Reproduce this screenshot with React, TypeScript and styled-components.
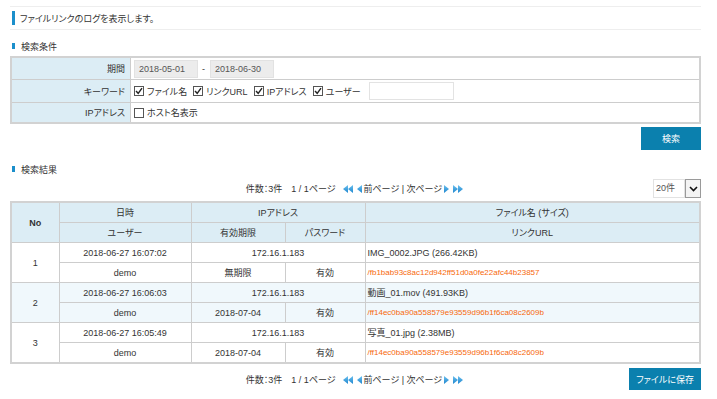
import React from "react";
import styled, { createGlobalStyle } from "styled-components";

const GlobalStyle = createGlobalStyle`
  body {
    margin: 0;
    background: #fff;
    font-family: "Liberation Sans", "Noto Sans CJK JP", sans-serif;
    font-size: 9px;
    color: #333;
    font-feature-settings: "palt";
  }
`;

const Page = styled.div`
  width: 691px;
  padding: 6px 16px 0 10px;
`;

const Notice = styled.div`
  display: flex;
  align-items: center;
  gap: 5px;
  height: 22px;
  padding-left: 2px;
  border-top: 1px solid #eee;
  border-bottom: 1px solid #eee;

  &::before {
    content: "";
    width: 3px;
    height: 14px;
    background: #1b8fcb;
  }
`;

const SectionTitle = styled.div<{ $top: number }>`
  display: flex;
  align-items: center;
  gap: 6px;
  height: 12px;
  margin-top: ${(p) => p.$top}px;
  padding-left: 2px;

  &::before {
    content: "";
    width: 3px;
    height: 6px;
    background: #1b8fcb;
  }
`;

const Table = styled.table<{ $top: number }>`
  width: 100%;
  margin-top: ${(p) => p.$top}px;
  border-collapse: collapse;
  border: 2px solid #d2d2d2;
  table-layout: fixed;

  th,
  td {
    border: 1px solid #cdcdcd;
    padding: 0 3px;
    font-weight: normal;
  }
`;

const Label = styled.th<{ $h: number }>`
  width: 110px;
  height: ${(p) => p.$h}px;
  background: #dcedf5;
  text-align: right;
  padding-right: 5px !important;
`;

const Field = styled.td`
  text-align: left;
`;

const FieldRow = styled.div`
  display: flex;
  align-items: center;
`;

const DateBox = styled.div`
  width: 58px;
  height: 16px;
  line-height: 16px;
  padding-left: 4px;
  background: #ececec;
  border: 1px solid #e2e2e2;
  color: #555;
`;

const Dash = styled.span`
  margin: 0 5px 0 4px;
`;

const Check = styled.label`
  display: inline-flex;
  align-items: center;
  gap: 3px;
  margin-right: 6px;
  white-space: nowrap;
`;

const Box = styled.span`
  display: inline-flex;
  width: 8px;
  height: 8px;
  border: 1px solid #555;
  background: #fff;
  align-items: center;
  justify-content: center;
`;

const TextInput = styled.div`
  width: 83px;
  height: 16px;
  margin-left: 2px;
  border: 1px solid #e3e3e3;
`;

const ButtonRow = styled.div`
  display: flex;
  justify-content: flex-end;
  margin-top: 3px;
`;

const Button = styled.button<{ $w: number }>`
  width: ${(p) => p.$w}px;
  height: 23px;
  padding: 0;
  border: none;
  background: #0b80ae;
  color: #fff;
  font: inherit;
  font-size: 9px;
`;

const PagerRow = styled.div<{ $top: number; $h: number }>`
  display: grid;
  grid-template-columns: 1fr auto 1fr;
  align-items: center;
  height: ${(p) => p.$h}px;
  margin-top: ${(p) => p.$top}px;
`;

const Pager = styled.div`
  grid-column: 2;
  display: flex;
  align-items: center;
  white-space: nowrap;
`;

const PageInfo = styled.span`
  margin-right: 5px;
`;

const Arrow = styled.svg`
  margin: 0 2px;
`;

const PerPage = styled.div`
  justify-self: end;
  display: flex;
  height: 19px;
`;

const PerPageValue = styled.div`
  width: 28px;
  line-height: 17px;
  padding-left: 2px;
  border: 1px solid #e2e2e2;
  color: #555;
`;

const PerPageToggle = styled.div`
  width: 14px;
  display: flex;
  align-items: center;
  justify-content: center;
  border: 1px solid #9a9a9a;
  background: #f4f4f4;
`;

const BottomButton = styled.div`
  justify-self: end;
  align-self: start;
`;

const Col = styled.col<{ $w: number }>`
  width: ${(p) => p.$w}px;
`;

const HeadCell = styled.th<{ $h?: number }>`
  background: #dcedf5;
  text-align: center;
  ${(p) => (p.$h ? `height: ${p.$h}px;` : "")}
`;

const NoHead = styled(HeadCell)`
  font-weight: bold !important;
`;

const Row = styled.tr<{ $alt: boolean }>`
  background: ${(p) => (p.$alt ? "#f0f8fc" : "#fff")};

  td {
    height: 19px;
    text-align: center;
  }
`;

const FileCell = styled.td`
  text-align: left !important;
  padding-left: 2px !important;
`;

const LinkCell = styled.td`
  text-align: left !important;
  padding-left: 2px !important;
  color: #f7690c;
  font-size: 8px;
  white-space: nowrap;
`;

const Tick = () => (
  <svg width="8" height="8" viewBox="0 0 8 8">
    <path d="M1 4 L3.2 6.3 L7 1.2" fill="none" stroke="#222" strokeWidth="1.4" />
  </svg>
);

const CheckItem = ({ label, checked }: { label: string; checked: boolean }) => (
  <Check>
    <Box>{checked && <Tick />}</Box>
    {label}
  </Check>
);

const Tri = ({ left, x }: { left: boolean; x: number }) =>
  left ? (
    <polygon points={`${x + 5},0 ${x + 5},8 ${x},4`} fill="url(#pg)" />
  ) : (
    <polygon points={`${x},0 ${x},8 ${x + 5},4`} fill="url(#pg)" />
  );

const ArrowIcon = ({ left, double }: { left: boolean; double: boolean }) => (
  <Arrow width={double ? 10 : 5} height="8" viewBox={`0 0 ${double ? 10 : 5} 8`}>
    <defs>
      <linearGradient id="pg" x1="0" y1="0" x2="0" y2="1">
        <stop offset="0" stopColor="#6cc0ee" />
        <stop offset="1" stopColor="#1d86cf" />
      </linearGradient>
    </defs>
    <Tri left={left} x={0} />
    {double && <Tri left={left} x={5} />}
  </Arrow>
);

const PagerNav = () => (
  <Pager>
    <PageInfo>件数：3件　1 / 1ページ</PageInfo>
    <ArrowIcon left double />
    <ArrowIcon left double={false} />
    前ページ | 次ページ
    <ArrowIcon left={false} double={false} />
    <ArrowIcon left={false} double />
  </Pager>
);

const rows = [
  {
    no: 1,
    date: "2018-06-27 16:07:02",
    ip: "172.16.1.183",
    user: "demo",
    expire: "無期限",
    pass: "有効",
    file: "IMG_0002.JPG (266.42KB)",
    url: "/fb1bab93c8ac12d942ff51d0a0fe22afc44b23857",
  },
  {
    no: 2,
    date: "2018-06-27 16:06:03",
    ip: "172.16.1.183",
    user: "demo",
    expire: "2018-07-04",
    pass: "有効",
    file: "動画_01.mov (491.93KB)",
    url: "/ff14ec0ba90a558579e93559d96b1f6ca08c2609b",
  },
  {
    no: 3,
    date: "2018-06-27 16:05:49",
    ip: "172.16.1.183",
    user: "demo",
    expire: "2018-07-04",
    pass: "有効",
    file: "写真_01.jpg (2.38MB)",
    url: "/ff14ec0ba90a558579e93559d96b1f6ca08c2609b",
  },
];

const App = () => {
  return (
    <Page>
      <GlobalStyle />
      <Notice>ファイルリンクのログを表示します。</Notice>

      <SectionTitle $top={10}>検索条件</SectionTitle>
      <Table $top={4}>
        <tbody>
          <tr>
            <Label $h={21}>期間</Label>
            <Field>
              <FieldRow>
                <DateBox>2018-05-01</DateBox>
                <Dash>-</Dash>
                <DateBox>2018-06-30</DateBox>
              </FieldRow>
            </Field>
          </tr>
          <tr>
            <Label $h={22}>キーワード</Label>
            <Field>
              <FieldRow>
                <CheckItem label="ファイル名" checked />
                <CheckItem label="リンクURL" checked />
                <CheckItem label="IPアドレス" checked />
                <CheckItem label="ユーザー" checked />
                <TextInput />
              </FieldRow>
            </Field>
          </tr>
          <tr>
            <Label $h={19}>IPアドレス</Label>
            <Field>
              <FieldRow>
                <CheckItem label="ホスト名表示" checked={false} />
              </FieldRow>
            </Field>
          </tr>
        </tbody>
      </Table>
      <ButtonRow>
        <Button $w={60}>検索</Button>
      </ButtonRow>

      <SectionTitle $top={13}>検索結果</SectionTitle>
      <PagerRow $top={4} $h={19}>
        <PagerNav />
        <PerPage>
          <PerPageValue>20件</PerPageValue>
          <PerPageToggle>
            <svg width="9" height="6" viewBox="0 0 9 6">
              <path d="M1 1 L4.5 4.5 L8 1" fill="none" stroke="#111" strokeWidth="1.6" />
            </svg>
          </PerPageToggle>
        </PerPage>
      </PagerRow>

      <Table $top={3}>
        <colgroup>
          <Col $w={48} />
          <Col $w={132} />
          <Col $w={94} />
          <Col $w={80} />
          <col />
        </colgroup>
        <thead>
          <tr>
            <NoHead rowSpan={2}>No</NoHead>
            <HeadCell $h={19}>日時</HeadCell>
            <HeadCell colSpan={2}>IPアドレス</HeadCell>
            <HeadCell>ファイル名 (サイズ)</HeadCell>
          </tr>
          <tr>
            <HeadCell $h={19}>ユーザー</HeadCell>
            <HeadCell>有効期限</HeadCell>
            <HeadCell>パスワード</HeadCell>
            <HeadCell>リンクURL</HeadCell>
          </tr>
        </thead>
        {rows.map((r) => (
          <tbody key={r.no}>
            <Row $alt={r.no === 2}>
              <td rowSpan={2}>{r.no}</td>
              <td>{r.date}</td>
              <td colSpan={2}>{r.ip}</td>
              <FileCell>{r.file}</FileCell>
            </Row>
            <Row $alt={r.no === 2}>
              <td>{r.user}</td>
              <td>{r.expire}</td>
              <td>{r.pass}</td>
              <LinkCell>{r.url}</LinkCell>
            </Row>
          </tbody>
        ))}
      </Table>

      <PagerRow $top={4} $h={22}>
        <PagerNav />
        <BottomButton>
          <Button $w={72}>ファイルに保存</Button>
        </BottomButton>
      </PagerRow>
    </Page>
  );
};

export default App;
